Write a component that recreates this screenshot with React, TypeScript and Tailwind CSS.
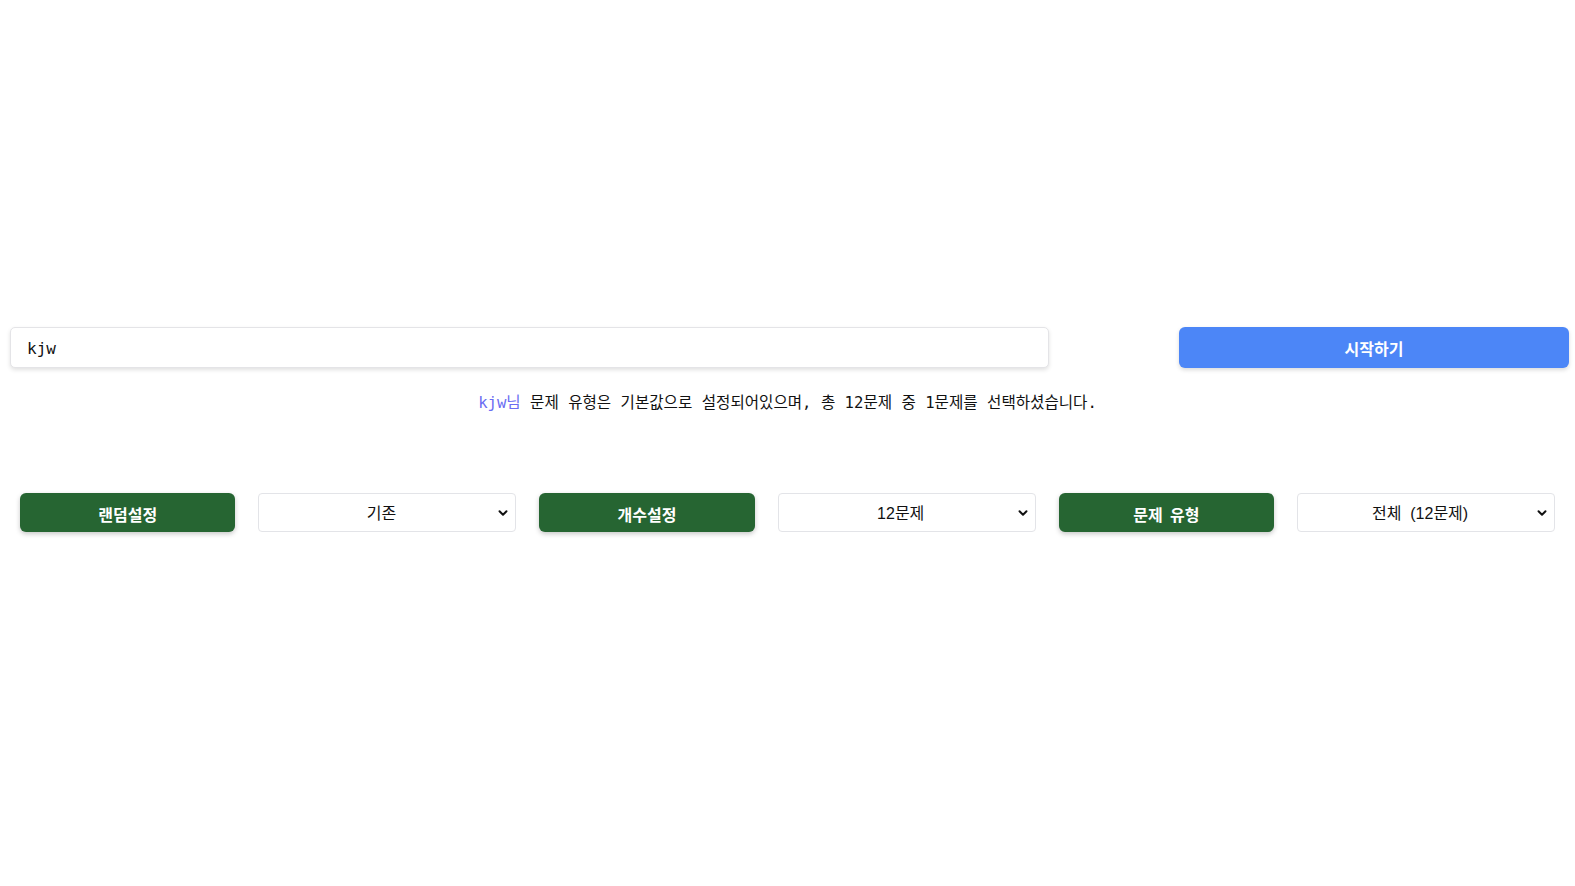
import React from "react";

const Chevron = () => (
  <svg width="12" height="12" viewBox="0 0 12 12" className="absolute right-[6px] top-1/2 -translate-y-1/2 pointer-events-none">
    <path d="M2.5 4.2 L6 7.7 L9.5 4.2" fill="none" stroke="#111" strokeWidth="2" strokeLinecap="round" strokeLinejoin="round" />
  </svg>
);

const Sel = ({ label }: { label: string }) => (
  <div className="relative w-[258.5px] h-[39px] bg-white border border-[#e3e4e8] rounded-[4px] flex items-center justify-center pt-[3px] text-[16px] text-[#111]" style={{ fontFamily: '"Liberation Sans", "Noto Sans CJK KR", sans-serif' }}>
    <span className="pr-[12px] whitespace-pre">{label}</span>
    <Chevron />
  </div>
);

const GreenBtn = ({ label }: { label: string }) => (
  <button className="w-[216px] h-[39px] bg-[#266532] rounded-[6px] text-white font-bold text-[16px] pt-[3px] shadow-[0_2px_5px_rgba(0,0,0,0.22)] whitespace-pre" style={{ fontFamily: '"Noto Sans CJK KR", sans-serif' }}>
    {label}
  </button>
);

export default function App() {
  return (
    <div className="w-[1575px] h-[886px] bg-white pt-[327px]">
      <div className="flex items-center pl-[10px]">
        <div className="w-[1039px] h-[41px] border border-[#e4e4e7] rounded-[5px] bg-white shadow-[0_2px_4px_rgba(0,0,0,0.12)] flex items-center pl-[16px] pt-[2px] text-[16px] text-[#111]" style={{ fontFamily: '"DejaVu Sans Mono", "Noto Sans CJK KR", monospace' }}>
          kjw
        </div>
        <button className="ml-[130px] w-[390px] h-[41px] bg-[#4c86f7] rounded-[6px] text-white font-bold text-[16px] shadow-[0_2px_4px_rgba(0,0,0,0.15)]" style={{ fontFamily: '"Noto Sans CJK KR", sans-serif' }}>
          시작하기
        </button>
      </div>
      <div className="mt-[24px] text-center text-[15.6px] leading-[22px] text-[#111]" style={{ fontFamily: '"DejaVu Sans Mono", "Noto Sans CJK KR", monospace' }}>
        <span className="text-[#6a6cf2]">kjw님</span> 문제 유형은 기본값으로 설정되어있으며, 총 12문제 중 1문제를 선택하셨습니다.
      </div>
      <div className="mt-[79px] flex items-center px-[20px] gap-[23px]">
        <GreenBtn label="랜덤설정" />
        <Sel label="기존" />
        <GreenBtn label="개수설정" />
        <Sel label="12문제" />
        <GreenBtn label="문제  유형" />
        <Sel label="전체  (12문제)" />
      </div>
    </div>
  );
}
